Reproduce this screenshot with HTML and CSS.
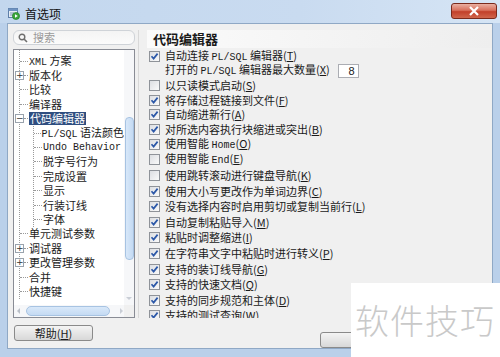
FILE: index.html
```html
<!DOCTYPE html>
<html lang="zh-CN">
<head>
    <meta charset="UTF-8">
    <title>首选项</title>
    <link rel="stylesheet" href="styles.css">
</head>
<body>

    <div class="window">
        <div class="titlebar">
            <svg class="app-icon" width="12" height="12" viewBox="0 0 12 12">
                <rect x="0.5" y="0.5" width="9" height="9" fill="#e4ecf5" stroke="#5f7fa8"/>
                <rect x="0.5" y="0.5" width="9" height="2.5" fill="#6f93c2"/>
                <line x1="2" y1="5" x2="6" y2="5" stroke="#7f95b3"/>
                <line x1="2" y1="7" x2="5" y2="7" stroke="#7f95b3"/>
                <circle cx="8" cy="8" r="3.6" fill="#3aa53a" stroke="#1f7a22" stroke-width="0.6"/>
                <path d="M7 6.2 L9.8 8 L7 9.8 Z" fill="#fff"/>
            </svg>
            <span class="title">首选项</span>
            <div class="close-btn">
                <svg width="14" height="10" viewBox="0 0 14 10">
                    <path d="M3 1 L11 9 M11 1 L3 9" stroke="#fff" stroke-width="2.2"/>
                </svg>
            </div>
        </div>

        <div class="client">
            <div class="main">
                <div class="left-pane">
                    <div class="search">
                        <svg width="10" height="10" viewBox="0 0 10 10">
                            <circle cx="4" cy="4" r="2.8" fill="none" stroke="#6e6e6e" stroke-width="1.4"/>
                            <path d="M6 6 L9 9" stroke="#6e6e6e" stroke-width="1.6"/>
                        </svg>
                        <span>搜索</span>
                    </div>

                    <div class="tree">
                        <div class="tree-body">
                            <div class="tree-view">
                                <ul class="tree-root">
                                    <li class="node"><span class="conn"></span><span><span class="en">XML</span> 方案</span></li>
                                    <li class="node"><span class="exp">+</span><span class="conn short"></span><span>版本化</span></li>
                                    <li class="node"><span class="conn"></span><span>比较</span></li>
                                    <li class="node"><span class="conn"></span><span>编译器</span></li>
                                    <li>
                                        <div class="node"><span class="exp">−</span><span class="conn short"></span><span class="selected">代码编辑器</span></div>
                                        <ul class="tree-sub">
                                            <li class="node"><span class="conn"></span><span><span class="en">PL/SQL</span> 语法颜色</span></li>
                                            <li class="node"><span class="conn"></span><span class="en">Undo Behavior</span></li>
                                            <li class="node"><span class="conn"></span><span>脱字号行为</span></li>
                                            <li class="node"><span class="conn"></span><span>完成设置</span></li>
                                            <li class="node"><span class="conn"></span><span>显示</span></li>
                                            <li class="node"><span class="conn"></span><span>行装订线</span></li>
                                            <li class="node"><span class="conn"></span><span>字体</span></li>
                                        </ul>
                                    </li>
                                    <li class="node"><span class="conn"></span><span>单元测试参数</span></li>
                                    <li class="node"><span class="exp">+</span><span class="conn short"></span><span>调试器</span></li>
                                    <li class="node"><span class="exp">+</span><span class="conn short"></span><span>更改管理参数</span></li>
                                    <li class="node"><span class="conn"></span><span>合并</span></li>
                                    <li class="node"><span class="conn"></span><span>快捷键</span></li>
                                </ul>
                            </div>
                            <div class="vscroll">
                                <div class="vthumb"></div>
                                <span class="arrow-down"></span>
                            </div>
                        </div>
                        <div class="hscroll">
                            <span class="arrow-left"></span>
                            <div class="hthumb"></div>
                            <span class="arrow-right"></span>
                            <div class="corner"></div>
                        </div>
                    </div>
                </div>

                <div class="divider"></div>

                <div class="right-pane">
                    <div class="heading">代码编辑器</div>

                    <div class="opts-a">
                        <div class="opt"><span class="cb checked"></span><span>自动连接 <span class="en">PL/SQL</span> 编辑器(<u>T</u>)</span></div>
                        <div class="opt indent"><span>打开的 <span class="en">PL/SQL</span> 编辑器最大数量(<u>X</u>)</span><span class="num-input">8</span></div>
                        <div class="opt"><span class="cb"></span><span>以只读模式启动(<u>S</u>)</span></div>
                        <div class="opt"><span class="cb checked"></span><span>将存储过程链接到文件(<u>F</u>)</span></div>
                        <div class="opt"><span class="cb checked"></span><span>自动缩进新行(<u>A</u>)</span></div>
                        <div class="opt"><span class="cb checked"></span><span>对所选内容执行块缩进或突出(<u>B</u>)</span></div>
                    </div>
                    <div class="opts-b">
                        <div class="opt"><span class="cb checked"></span><span>使用智能 <span class="en">Home</span>(<u>O</u>)</span></div>
                        <div class="opt"><span class="cb"></span><span>使用智能 <span class="en">End</span>(<u>E</u>)</span></div>
                        <div class="opt"><span class="cb"></span><span>使用跳转滚动进行键盘导航(<u>K</u>)</span></div>
                        <div class="opt"><span class="cb checked"></span><span>使用大小写更改作为单词边界(<u>C</u>)</span></div>
                        <div class="opt"><span class="cb checked"></span><span>没有选择内容时启用剪切或复制当前行(<u>L</u>)</span></div>
                        <div class="opt"><span class="cb checked"></span><span>自动复制粘贴导入(<u>M</u>)</span></div>
                        <div class="opt"><span class="cb checked"></span><span>粘贴时调整缩进(<u>I</u>)</span></div>
                        <div class="opt"><span class="cb checked"></span><span>在字符串文字中粘贴时进行转义(<u>P</u>)</span></div>
                        <div class="opt"><span class="cb checked"></span><span>支持的装订线导航(<u>G</u>)</span></div>
                        <div class="opt"><span class="cb checked"></span><span>支持的快速文档(<u>Q</u>)</span></div>
                        <div class="opt"><span class="cb checked"></span><span>支持的同步规范和主体(<u>D</u>)</span></div>
                        <div class="opt"><span class="cb checked"></span><span>支持的测试查询(<u>W</u>)</span></div>
                    </div>
                </div>
            </div>

            <div class="footer">
                <button class="btn help-btn">帮助(<u>H</u>)</button>
                <button class="btn ok-btn"></button>
            </div>
        </div>
    </div>

    <div class="watermark">软件技巧</div>

    <script>
        // checked boxes get a tick mark
        document.querySelectorAll(".cb.checked").forEach((box) => {
            box.innerHTML = '<svg width="9" height="9" viewBox="0 0 9 9"><path d="M1.5 4.3 L3.6 6.6 L7.6 1.6" fill="none" stroke="#2c58a8" stroke-width="1.7"/></svg>';
        });
    </script>

</body>
</html>
```

FILE: styles.css
```css
body {
    margin: 0;
    width: 500px;
    height: 357px;
    overflow: hidden;
    background: #bad0ea;
    font-family: "Noto Sans CJK SC", "Liberation Sans", sans-serif;
    font-size: 11px;
    color: #1a1a1a;
    position: relative;
}
.window {
    display: flex;
    flex-direction: column;
    height: 357px;
}
.titlebar {
    height: 26px;
    display: flex;
    align-items: flex-start;
    background: linear-gradient(to right, #c3d7ee, #c9dbf0 60%, #d6e5f5);
}
.app-icon {
    margin: 8px 0 0 8px;
}
.title {
    margin: 6px 0 0 5px;
    font-size: 12px;
    line-height: 16px;
    color: #111;
}
.close-btn {
    margin: 3px 3px 0 auto;
    width: 44px;
    height: 14px;
    border: 1px solid #7a2a1c;
    border-radius: 3px;
    background: linear-gradient(#eab0a2, #d8705c 45%, #c2402a 55%, #d0664c);
    display: flex;
    align-items: center;
    justify-content: center;
}
.client {
    flex: 1;
    margin: 0 7px 8px 7px;
    border: 1px solid #8fa8c5;
    background: #f0f0f0;
    display: flex;
    flex-direction: column;
}
.main {
    height: 294px;
    display: flex;
}
.left-pane {
    width: 122px;
    padding: 6px 3px 0 5px;
}
.search {
    height: 13px;
    border: 1px solid #cfd3d8;
    border-radius: 6px;
    background: linear-gradient(#f4f4f4, #fbfbfb);
    display: flex;
    align-items: center;
    gap: 5px;
    padding-left: 4px;
    margin-bottom: 4px;
    color: #9a9a9a;
    line-height: 13px;
}
.tree {
    height: 267px;
    border: 1px solid #898c95;
    background: #fff;
    display: flex;
    flex-direction: column;
}
.tree-body {
    flex: 1;
    display: flex;
    overflow: hidden;
}
.tree-view {
    flex: 1;
    overflow: hidden;
    white-space: nowrap;
}
ul {
    list-style: none;
    margin: 0;
    padding: 0;
}
.tree-root {
    margin-left: 5px;
    padding-top: 4px;
    border-left: 1px dotted #9a9a9a;
}
.tree-sub {
    margin-left: 13px;
    border-left: 1px dotted #9a9a9a;
}
.node {
    height: 14.4px;
    line-height: 13px;
    display: flex;
    align-items: center;
}
.conn {
    width: 8px;
    border-top: 1px dotted #9a9a9a;
    margin-right: 1px;
}
.conn.short {
    width: 4px;
}
.exp {
    width: 7px;
    height: 7px;
    margin-left: -5px;
    border: 1px solid #9aa3ad;
    background: #fff;
    font-size: 9px;
    line-height: 7px;
    text-align: center;
    color: #333;
    font-family: "DejaVu Sans", sans-serif;
}
.selected {
    background: #2f4e80;
    color: #fff;
    padding: 0 1px;
    line-height: 13px;
}
.en {
    font-family: "Liberation Mono", monospace;
    font-size: 10px;
}
.vscroll {
    width: 10px;
    background: #f6f7f9;
    display: flex;
    flex-direction: column;
    align-items: center;
}
.vthumb {
    margin-top: 67px;
    width: 7px;
    height: 141px;
    border: 1px solid #a7c3e2;
    border-radius: 4px;
    background: linear-gradient(to right, #d8e8f9, #c4daf3);
}
.arrow-down {
    margin-top: auto;
    margin-bottom: 5px;
    border-left: 3px solid transparent;
    border-right: 3px solid transparent;
    border-top: 3px solid #c9ced6;
}
.hscroll {
    height: 12px;
    display: flex;
    align-items: center;
    background: #f6f7f9;
}
.arrow-left {
    margin-left: 3px;
    border-top: 3px solid transparent;
    border-bottom: 3px solid transparent;
    border-right: 3px solid #b9bfc8;
}
.hthumb {
    margin-left: 6px;
    width: 82px;
    height: 8px;
    border: 1px solid #a7c3e2;
    border-radius: 5px;
    background: linear-gradient(#d8e8f9, #c4daf3);
}
.arrow-right {
    margin-left: 10px;
    border-top: 3px solid transparent;
    border-bottom: 3px solid transparent;
    border-left: 3px solid #c9ced6;
}
.corner {
    margin-left: auto;
    width: 10px;
    height: 12px;
    background: #f0f0f0;
}
.divider {
    width: 1px;
    background: #d8d8d8;
    margin-top: 6px;
}
.right-pane {
    flex: 1;
    padding: 6px 0 0 8px;
    overflow: hidden;
}
.heading {
    height: 18px;
    margin-bottom: 1px;
    padding-left: 6px;
    font-size: 13px;
    font-weight: bold;
    line-height: 18px;
    background: linear-gradient(to right, #fbfbfb, #f3f3f3 60%, #eeeeee);
}
.opts-a,
.opts-b {
    padding-left: 2px;
    white-space: nowrap;
}
.opts-a .opt {
    height: 14.6px;
}
.opts-b .opt {
    height: 15.6px;
}
.opt {
    display: flex;
    align-items: center;
    line-height: 13px;
}
.opt.indent {
    padding-left: 16px;
}
.cb {
    width: 9px;
    height: 9px;
    border: 1px solid #8f9399;
    background: linear-gradient(135deg, #dcdee2, #fafafa);
    margin-right: 5px;
    display: flex;
    align-items: center;
    justify-content: center;
}
.num-input {
    margin-left: 8px;
    width: 16px;
    height: 12px;
    border: 1px solid #abadb3;
    background: #fff;
    text-align: right;
    padding-right: 3px;
    line-height: 12px;
    font-family: "Liberation Sans", sans-serif;
}
.footer {
    flex: 1;
    display: flex;
    align-items: flex-start;
}
.btn {
    height: 16px;
    border: 1px solid #8a8a8a;
    border-radius: 3px;
    background: linear-gradient(#f4f4f4, #e6e6e6 50%, #d8d8d8);
    font-family: "Noto Sans CJK SC", sans-serif;
    font-size: 11px;
    line-height: 12px;
    padding: 0;
    color: #1a1a1a;
}
.help-btn {
    margin: 7px 0 0 6px;
    width: 79px;
}
.ok-btn {
    margin: 14px 0 0 227px;
    width: 80px;
}
.watermark {
    position: absolute;
    left: 351px;
    top: 283px;
    width: 145px;
    height: 74px;
    padding-left: 4px;
    background: #fff;
    color: #c9c9c9;
    font-size: 34px;
    line-height: 74px;
    font-weight: 300;
    letter-spacing: 1px;
}
```
